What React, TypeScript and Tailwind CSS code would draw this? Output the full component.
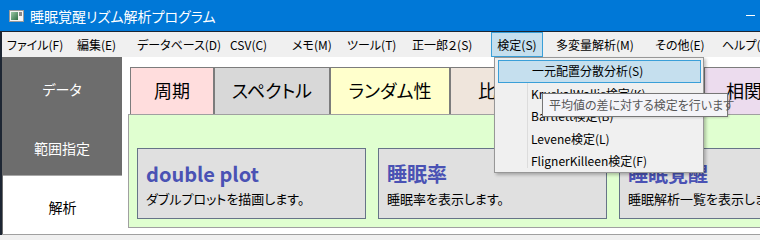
import React from "react";

const menuItems = [
  { label: "ファイル(F)", w: 70 },
  { label: "編集(E)", w: 60 },
  { label: "データベース(D)", w: 93 },
  { label: "CSV(C)", w: 62 },
  { label: "メモ(M)", w: 55 },
  { label: "ツール(T)", w: 65 },
  { label: "正一郎２(S)", w: 84 },
  { label: "検定(S)", w: 60, active: true },
  { label: "多変量解析(M)", w: 99 },
  { label: "その他(E)", w: 67 },
  { label: "ヘルプ(H)", w: 80 },
];

const tabs = [
  { label: "周期", w: 84, bg: "bg-[#ffdddd]" },
  { label: "スペクトル", w: 116, bg: "bg-[#d8d8d8]" },
  { label: "ランダム性", w: 120, bg: "bg-[#ffffcc]" },
  { label: "比較", w: 92, bg: "bg-[#efe5dc]" },
  { label: "活動量", w: 162, bg: "bg-[#efe5dc]" },
  { label: "相関", w: 80, bg: "bg-[#ecdcee]" },
];

const cards = [
  { title: "double plot", desc: "ダブルプロットを描画します。" },
  { title: "睡眠率", desc: "睡眠率を表示します。" },
  { title: "睡眠覚醒", desc: "睡眠解析一覧を表示します。" },
];

const dropItems = [
  "一元配置分散分析(S)",
  "KruskalWallis検定(K)",
  "Bartlett検定(B)",
  "Levene検定(L)",
  "FlignerKilleen検定(F)",
];

function AppIcon() {
  return (
    <svg width="15" height="12" viewBox="0 0 15 12">
      <rect x="0.5" y="0.5" width="14" height="11" fill="#f4f4f4" stroke="#9a9a9a" />
      <defs>
        <linearGradient id="g" x1="0" y1="0" x2="1" y2="1">
          <stop offset="0" stopColor="#9cc7a6" />
          <stop offset="1" stopColor="#2f6e45" />
        </linearGradient>
      </defs>
      <rect x="2" y="2" width="7" height="8" fill="url(#g)" />
      <rect x="10" y="2" width="3" height="4" fill="#8a8a8a" />
    </svg>
  );
}

export default function App() {
  return (
    <div className="relative w-[760px] h-[240px] overflow-hidden bg-[#f0f0f0] font-['Noto_Sans_CJK_JP',sans-serif] [font-feature-settings:'palt'] text-black">
      {/* Title bar */}
      <div className="flex h-[31px] items-center bg-[#0078d7]">
        <div className="ml-[9px] flex items-center">
          <AppIcon />
        </div>
        <div className="ml-[6px] text-[14px] leading-[20px] text-white">睡眠覚醒リズム解析プログラム</div>
        <div className="flex-1" />
        <div className="mr-[5px] h-px w-[9px] bg-white" />
      </div>

      {/* Window body */}
      <div className="border-l-2 border-t border-[#1d2633] bg-[#f0f0f0]">
        {/* Menu bar */}
        <div className="flex h-[25px] text-[12px] leading-[16px]">
          <div className="w-[3px]" />
          {menuItems.map((m) => (
            <div key={m.label} className="flex h-full shrink-0" style={{ width: m.w }}>
              {m.active ? (
                <span className="flex h-full w-[52px] items-center justify-center border border-[#3a9fd8] bg-[#c5dfee]">
                  {m.label}
                </span>
              ) : (
                <span className="flex h-full items-center pl-[5px] whitespace-nowrap">{m.label}</span>
              )}
            </div>
          ))}
        </div>

        {/* Main */}
        <div className="flex h-[178px] border-b border-[#a0a0a0]">
          {/* Nav */}
          <div className="flex w-[120px] shrink-0 flex-col bg-[#6d6d6d] text-[14px] leading-[20px]">
            <div className="flex h-[60px] items-center justify-center pt-[3px] text-white">データ</div>
            <div className="flex h-[58px] items-center justify-center pt-[3px] text-white">範囲指定</div>
            <div className="ml-px flex h-[59px] items-center justify-center border-t border-[#a8a8a8] bg-white pt-[3px] text-black">
              解析
            </div>
          </div>

          {/* Content */}
          <div className="flex flex-1 flex-col overflow-hidden bg-white">
            <div className="ml-[8px] mt-[10px] flex h-[47px]">
              {tabs.map((t) => (
                <div
                  key={t.label}
                  className={`flex h-full shrink-0 items-center justify-center border-x border-t border-[#7c7c7c] pb-[2px] text-[18px] leading-[24px] whitespace-nowrap ${t.bg}`}
                  style={{ width: t.w }}
                >
                  {t.label}
                </div>
              ))}
            </div>
            <div className="ml-[6px] flex h-[114px] gap-[12px] border-y border-l border-[#a0a0a0] bg-[#e0ffd0] pl-[8px] pt-[33px]">
              {cards.map((c) => (
                <div key={c.title} className="h-[71px] w-[229px] shrink-0 overflow-hidden border border-[#667487] bg-[#e0e0e0] pl-[8px] pt-[13px]">
                  <div className="text-[20px] font-bold leading-[24px] text-[#4a52b4] whitespace-nowrap">{c.title}</div>
                  <div className="mt-[4px] text-[13px] leading-[18px] whitespace-nowrap">{c.desc}</div>
                </div>
              ))}
            </div>
          </div>
        </div>
      </div>

      {/* Dropdown */}
      <div className="absolute left-[494px] top-[57px] h-[116px] w-[210px] border border-[#979797] bg-[#f0f0f0] pt-[2px] text-[12px] leading-[16px] shadow-[2px_2px_3px_rgba(0,0,0,0.25)]">
        <div className="absolute left-[32px] top-[4px] bottom-[4px] w-px bg-[#dcdcdc]" />
        {dropItems.map((d, i) => (
          <div
            key={d}
            className={`relative ml-[3px] mr-[2px] flex h-[22.5px] items-center pl-[33px] whitespace-nowrap ${
              i === 0 ? "border border-[#3a9fd8] bg-[#c5dfee]" : ""
            }`}
          >
            {d}
          </div>
        ))}
      </div>

      {/* Tooltip */}
      <div className="absolute left-[542px] top-[93px] flex h-[24px] w-[186px] items-center border border-[#767676] bg-[#f4f4f8] pl-[6px] text-[12px] leading-[16px] text-[#575757] whitespace-nowrap shadow-[1px_1px_2px_rgba(0,0,0,0.15)]">
        平均値の差に対する検定を行います
      </div>
    </div>
  );
}
